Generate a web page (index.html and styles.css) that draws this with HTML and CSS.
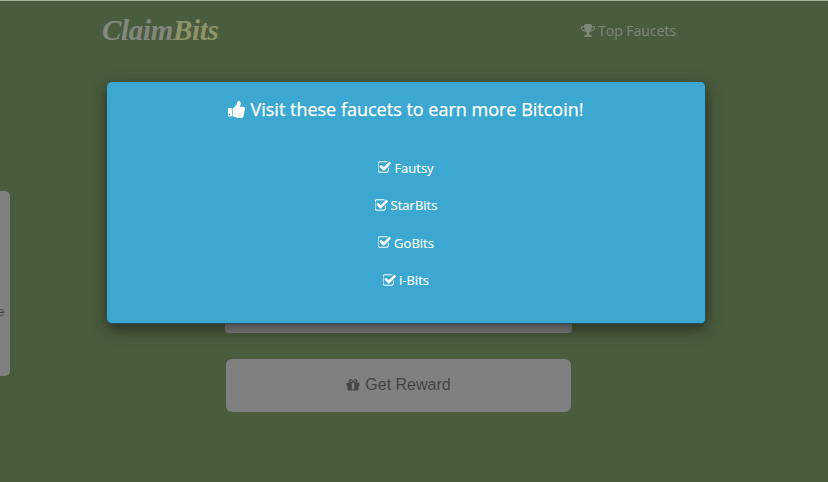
FILE: index.html
```html
<!DOCTYPE html>
<html lang="en">
<head>
<meta charset="utf-8">
<title>ClaimBits</title>
<link rel="stylesheet" href="styles.css">
</head>
<body>
<svg class="sprites" aria-hidden="true">
  <symbol id="i-check" viewBox="128 128 1600 1536"><path d="M1472 930v318q0 119-84.5 203.5t-203.5 84.5h-832q-119 0-203.5-84.5t-84.5-203.5v-832q0-119 84.5-203.5t203.5-84.5h832q63 0 117 25 15 7 18 23 3 17-9 29l-49 49q-10 10-23 10-3 0-9-2-23-6-45-6h-832q-66 0-113 47t-47 113v832q0 66 47 113t113 47h832q66 0 113-47t47-113v-254q0-13 9-22l64-64q10-10 23-10 6 0 12 3 20 8 20 29zm231-489l-814 814q-24 24-57 24t-57-24l-430-430q-24-24-24-57t24-57l110-110q24-24 57-24t57 24l263 263 647-647q24-24 57-24t57 24l110 110q24 24 24 57t-24 57z"/></symbol>
</svg>
<div class="page">
  <header class="nav">
    <a class="logo"><span class="logo-a">Claim</span><span class="logo-b">Bits</span></a>
    <a class="top-link">
      <svg class="icon-trophy" viewBox="64 128 1664 1536"><path d="M522 883q-74-162-74-371h-256v96q0 78 94.5 162t235.5 113zm1078-275v-96h-256q0 209-74 371 141-29 235.5-113t94.5-162zm128-128v128q0 71-41.5 143t-112 130-173 97.5-215.5 44.5q-42 54-95 95-38 34-52.5 72.5t-14.5 89.5q0 54 30.5 91t97.5 37q75 0 133.5 45.5t58.5 114.5v64q0 14-9 23t-23 9h-832q-14 0-23-9t-9-23v-64q0-69 58.5-114.5t133.5-45.5q67 0 97.5-37t30.5-91q0-51-14.5-89.5t-52.5-72.5q-53-41-95-95-113-5-215.5-44.5t-173-97.5-112-130-41.5-143v-128q0-40 28-68t68-28h288v-96q0-66 47-113t113-47h576q66 0 113 47t47 113v96h288q40 0 68 28t28 68z"/></svg>
      Top Faucets
    </a>
  </header>
  <main class="content">
    <aside class="side-card"><span class="side-text">Share</span></aside>
    <section class="claim">
      <div class="field"></div>
      <button class="reward" type="button">
        <svg class="icon-gift" viewBox="64 192 1664 1408"><path d="M1056 1356v-716h-320v716q0 25 18 38.5t46 13.5h192q28 0 46-13.5t18-38.5zm-456-844h195l-126-161q-26-31-69-31-40 0-68 28t-28 68 28 68 68 28zm688-96q0-40-28-68t-68-28q-43 0-69 31l-125 161h194q40 0 68-28t28-68zm376 256v320q0 14-9 23t-23 9h-96v416q0 40-28 68t-68 28h-1088q-40 0-68-28t-28-68v-416h-96q-14 0-23-9t-9-23v-320q0-14 9-23t23-9h440q-93 0-158.5-65.5t-65.5-158.5 65.5-158.5 158.5-65.5q107 0 168 77l128 165 128-165q61-77 168-77 93 0 158.5 65.5t65.5 158.5-65.5 158.5-158.5 65.5h440q14 0 23 9t9 23z"/></svg>
        Get Reward
      </button>
    </section>
  </main>
</div>
<div class="modal">
  <h2 class="modal-title">
    <svg class="icon-thumb" viewBox="128 128 1536 1536"><path d="M320 1344q0-26-19-45t-45-19q-27 0-45.5 19t-18.5 45q0 27 18.5 45.5t45.5 18.5q26 0 45-18.5t19-45.5zm160-512v640q0 26-19 45t-45 19h-288q-26 0-45-19t-19-45v-640q0-26 19-45t45-19h288q26 0 45 19t19 45zm1184 0q0 86-55 149 15 44 15 76 3 76-43 137 17 56 0 117-15 57-54 94 9 112-49 181-64 76-197 78h-129q-66 0-144-15.5t-121.5-29-120.5-39.5q-123-43-158-44-26-1-45-19.5t-19-44.5v-641q0-25 18-43.5t43-20.5q24-2 76-59t101-121q68-87 101-120 18-18 31-48t17.5-48.5 13.5-60.5q7-39 12.5-61t19.5-52 34-50q19-19 45-19 46 0 82.5 10.5t60 26 40 40.5 24 45 12 50 5 45 .5 39q0 38-9.5 76t-19 60-27.5 56q-3 6-10 18t-11 22-8 24h277q78 0 135 57t57 135z"/></svg>
    Visit these faucets to earn more Bitcoin!
  </h2>
  <ul class="faucets">
    <li><svg class="icon-check"><use href="#i-check"/></svg> Fautsy</li>
    <li><svg class="icon-check"><use href="#i-check"/></svg> StarBits</li>
    <li><svg class="icon-check"><use href="#i-check"/></svg> GoBits</li>
    <li><svg class="icon-check"><use href="#i-check"/></svg> i-Bits</li>
  </ul>
</div>
</body>
</html>
```
FILE: styles.css
```css
* { box-sizing: border-box; }
html, body { height: 100%; }
body {
  margin: 0;
  background: #4a5c3e;
  overflow: hidden;
  font-family: "Open Sans", "Liberation Sans", sans-serif;
}
.sprites { display: none; }
.page {
  height: 100%;
  border-top: 1px solid #a3b198;
}
.nav {
  display: flex;
  align-items: center;
  height: 59px;
  padding-left: 102px;
}
.logo {
  width: 479px;
  font-family: "Liberation Serif", serif;
  font-style: italic;
  font-weight: bold;
  font-size: 29px;
  letter-spacing: -0.3px;
}
.logo-a { color: #83887e; }
.logo-b { color: #8c9468; }
.top-link {
  display: flex;
  align-items: center;
  gap: 3px;
  color: #7f8779;
  font-size: 14px;
}
.icon-trophy { width: 14px; height: 13px; fill: #7f8779; }
.content {
  display: flex;
  align-items: flex-start;
  padding-top: 131px;
}
.side-card {
  flex: none;
  width: 160px;
  height: 185px;
  margin-left: -150px;
  padding-top: 113px;
  background: #808080;
  border-radius: 5px;
  color: #444;
  font-family: "Liberation Sans", sans-serif;
  font-size: 13px;
  text-align: right;
}
.side-text { display: block; margin-right: 5.5px; }
.claim {
  flex: none;
  width: 347px;
  margin-left: 215px;
  padding-top: 92px;
}
.field {
  height: 50px;
  background: #808080;
  border-radius: 4px;
}
.reward {
  display: flex;
  align-items: center;
  justify-content: center;
  gap: 5px;
  width: 345px;
  height: 53px;
  margin: 26px 1px 0;
  padding: 0 0 2px;
  border: 0;
  border-radius: 6px;
  background: #808080;
  color: #444;
  font-family: "Liberation Sans", sans-serif;
  font-size: 16px;
}
.icon-gift { width: 14px; height: 12px; fill: #444; }
.modal {
  position: absolute;
  left: 107px;
  top: 82px;
  width: 599px;
  height: 242px;
  padding-top: 14px;
  background: #3ca8d1;
  border: 1px solid #2c4f5c;
  border-width: 0 1px 1px 0;
  border-radius: 5px;
  box-shadow: 0 5px 15px rgba(0, 0, 0, 0.5);
  color: #fff;
  text-align: center;
}
.modal-title {
  display: flex;
  align-items: center;
  justify-content: center;
  gap: 5px;
  margin: 0;
  font-size: 18px;
  font-weight: 400;
  -webkit-text-stroke: 0.25px #fff;
  line-height: 26px;
}
.icon-thumb { width: 17px; height: 17px; fill: #fff; }
.faucets {
  list-style: none;
  margin: 27px 0 0;
  padding: 0;
  font-size: 13px;
  font-weight: 400;
  -webkit-text-stroke: 0.15px #fff;
}
.faucets li {
  display: flex;
  align-items: center;
  justify-content: center;
  gap: 3px;
  height: 37.5px;
}
.icon-check { width: 13px; height: 13px; fill: #fff; }
```
